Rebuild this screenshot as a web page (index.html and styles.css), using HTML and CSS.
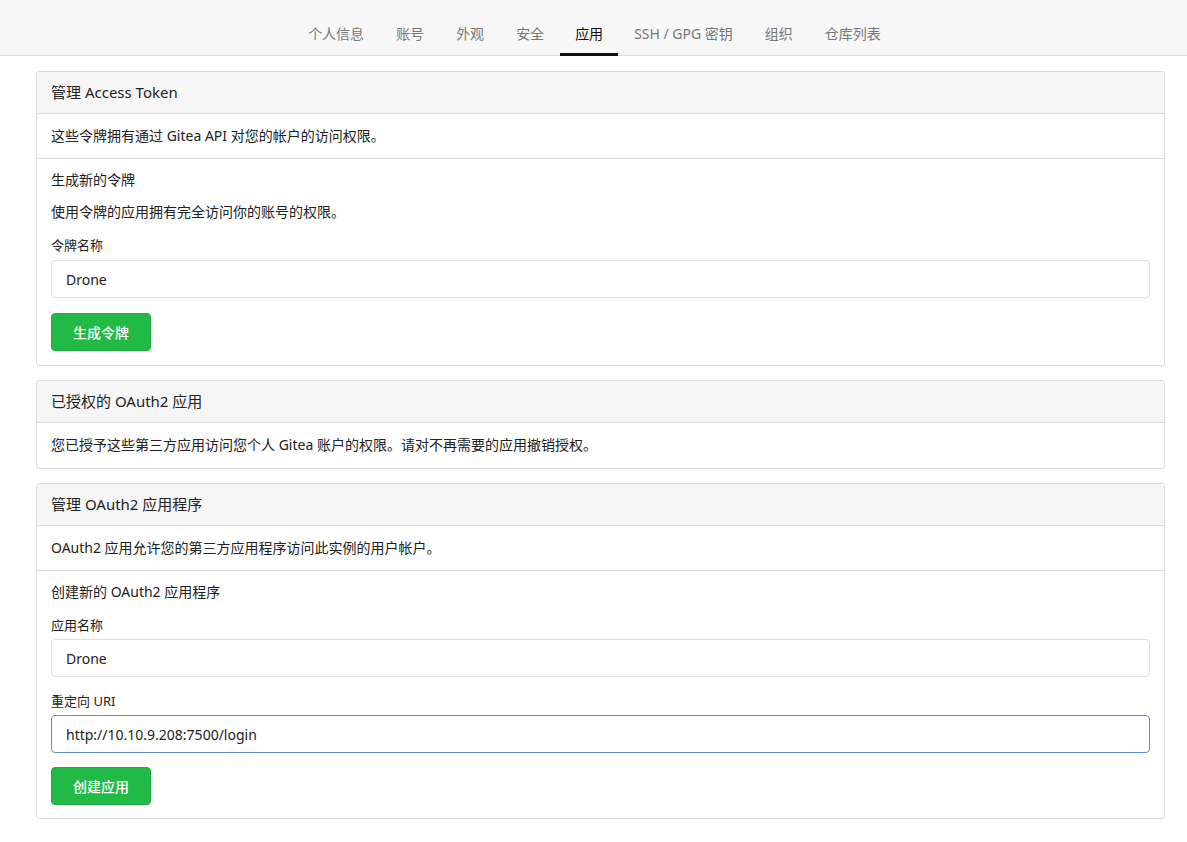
FILE: index.html
```html
<!DOCTYPE html>
<html lang="zh-CN">
<head>
    <meta charset="UTF-8">
    <meta name="viewport" content="width=device-width, initial-scale=1.0">
    <title>应用 - 设置</title>
    <link rel="stylesheet" href="styles.css">
</head>
<body>

    <div class="tab-menu">
        <a class="tab-item">个人信息</a>
        <a class="tab-item">账号</a>
        <a class="tab-item">外观</a>
        <a class="tab-item">安全</a>
        <a class="tab-item active">应用</a>
        <a class="tab-item">SSH / GPG 密钥</a>
        <a class="tab-item">组织</a>
        <a class="tab-item">仓库列表</a>
    </div>

    <div class="page-content">

        <div class="card">
            <div class="card-header">管理 Access Token</div>
            <div class="card-row">这些令牌拥有通过 Gitea API 对您的帐户的访问权限。</div>
            <div class="card-form">
                <div class="form-title">生成新的令牌</div>
                <p class="form-note">使用令牌的应用拥有完全访问你的账号的权限。</p>
                <label class="field-label" for="tokenName">令牌名称</label>
                <input type="text" id="tokenName" class="text-input" value="Drone">
                <button class="green-button">生成令牌</button>
            </div>
        </div>

        <div class="card">
            <div class="card-header">已授权的 OAuth2 应用</div>
            <div class="card-row last">您已授予这些第三方应用访问您个人 Gitea 账户的权限。请对不再需要的应用撤销授权。</div>
        </div>

        <div class="card">
            <div class="card-header">管理 OAuth2 应用程序</div>
            <div class="card-row">OAuth2 应用允许您的第三方应用程序访问此实例的用户帐户。</div>
            <div class="card-form compact">
                <div class="form-title">创建新的 OAuth2 应用程序</div>
                <label class="field-label" for="appName">应用名称</label>
                <input type="text" id="appName" class="text-input" value="Drone">
                <label class="field-label" for="redirectUri">重定向 URI</label>
                <input type="text" id="redirectUri" class="text-input focused" value="http://10.10.9.208:7500/login">
                <button class="green-button">创建应用</button>
            </div>
        </div>

    </div>

</body>
</html>
```

FILE: styles.css
```css
* {
    margin: 0;
    padding: 0;
    box-sizing: border-box;
}

body {
    font-family: "Noto Sans", "Noto Sans CJK SC", sans-serif;
    font-size: 14px;
    color: #212121;
    background-color: #fff;
}

.tab-menu {
    display: flex;
    justify-content: center;
    height: 56px;
    background-color: #f7f7f7;
    border-bottom: 1px solid #dcdcdc;
    padding-left: 2px;
}

.tab-item {
    display: flex;
    align-items: center;
    padding: 12px 16px 0 16px;
    font-size: 14px;
    color: #777;
    border-bottom: 3px solid transparent;
    margin-bottom: -1px;
    cursor: pointer;
}

.tab-item.active {
    padding: 12px 15px 0 15px;
    color: #111;
    border-bottom-color: #111;
}

.page-content {
    padding: 15px 22px 20px 36px;
}

.card {
    border: 1px solid #dcdcdc;
    border-radius: 3px;
    margin-bottom: 14px;
}

.card-header {
    background-color: #f6f6f6;
    border-bottom: 1px solid #dcdcdc;
    padding: 0 14px;
    height: 42px;
    line-height: 41px;
    font-size: 15px;
    color: #222;
}

.card-row {
    padding: 0 14px;
    height: 45px;
    line-height: 44px;
    border-bottom: 1px solid #dcdcdc;
    font-size: 14px;
}

.card-row.last {
    border-bottom: none;
    height: 45px;
}

.card-form {
    display: flex;
    flex-direction: column;
    align-items: flex-start;
    padding: 11px 14px 14px 14px;
}

.card-form.compact {
    padding-bottom: 13px;
}

.form-title {
    line-height: 20px;
    font-size: 14px;
}

.form-note {
    margin-top: 12px;
    line-height: 20px;
    font-size: 14px;
}

.field-label {
    margin-top: 13px;
    margin-bottom: 5px;
    line-height: 20px;
    font-size: 13px;
    color: #222;
}

.form-title + .field-label {
    margin-bottom: 4px;
}

.text-input {
    width: 100%;
    height: 38px;
    padding: 0 14px;
    font-family: inherit;
    font-size: 14px;
    color: #222;
    border: 1px solid #dedede;
    border-radius: 4px;
    outline: none;
}

.text-input + .field-label {
    margin-top: 14px;
    margin-bottom: 4px;
}

.text-input.focused {
    border-color: #5b8ed6;
}

.green-button {
    margin-top: 15px;
    width: 100px;
    height: 38px;
    font-family: inherit;
    font-size: 14px;
    font-weight: 500;
    color: #fff;
    background-color: #21ba45;
    border: 1px solid #1fad41;
    border-radius: 4px;
    cursor: pointer;
}

.compact .green-button {
    margin-top: 14px;
}

.green-button:hover {
    background-color: #16ab39;
}
```
